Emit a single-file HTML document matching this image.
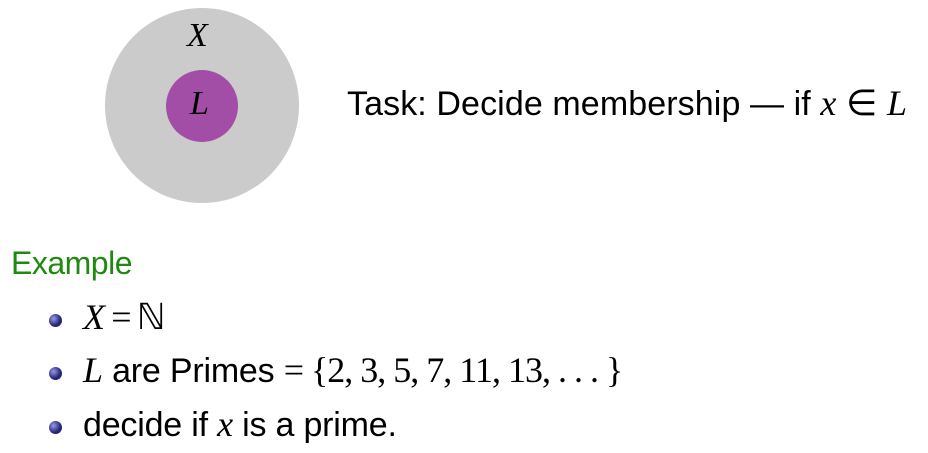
<!DOCTYPE html>
<html><head><meta charset="utf-8"><style>
html,body{margin:0;padding:0;background:#fff;width:928px;height:453px;overflow:hidden;position:relative}
.s{font-family:"Liberation Sans",sans-serif;position:absolute;white-space:nowrap;color:#000}
.m{font-family:"Liberation Serif",serif;font-style:italic}
.r{font-family:"Liberation Serif",serif}
.b{position:absolute;width:13px;height:13px;border-radius:50%;background:radial-gradient(circle at 35% 35%,#9a9ae0,#2a2a80 55%,#10104a)}
</style></head><body>
<div style="position:absolute;left:105px;top:8px;width:194px;height:195px;border-radius:50%;background:#cbcbcb"></div>
<div style="position:absolute;left:166px;top:70px;width:72px;height:72px;border-radius:50%;background:#a24ea6"></div>
<div class="s m" style="left:187px;top:17px;font-size:34px">X</div>
<div class="s m" style="left:190px;top:85px;font-size:34px">L</div>
<div class="s" style="left:347px;top:82px;font-size:34px;letter-spacing:0.1px">Task: Decide membership — if <span class="m" style="font-size:36px">x</span> <span class="r" style="font-size:36px">∈</span> <span class="m" style="font-size:36px">L</span></div>
<div class="s" style="left:11px;top:245px;font-size:32px;color:#1f8a10;letter-spacing:-0.5px">Example</div>
<div class="b" style="left:49px;top:314px"></div>
<div class="b" style="left:49px;top:367px"></div>
<div class="b" style="left:49px;top:421px"></div>
<div class="s" style="left:83px;top:296px;font-size:36px"><span class="m">X</span><span class="r" style="letter-spacing:-1px">&thinsp;=&thinsp;ℕ</span></div>
<div class="s" style="left:83px;top:349px;font-size:34px;letter-spacing:-0.2px"><span class="m" style="font-size:36px">L</span> are Primes <span class="r" style="font-size:36px;letter-spacing:-1px">= {2, 3, 5, 7, 11, 13, . . . }</span></div>
<div class="s" style="left:83px;top:403px;font-size:34px;letter-spacing:-0.2px">decide if <span class="m" style="font-size:36px">x</span> is a prime.</div>
</body></html>
